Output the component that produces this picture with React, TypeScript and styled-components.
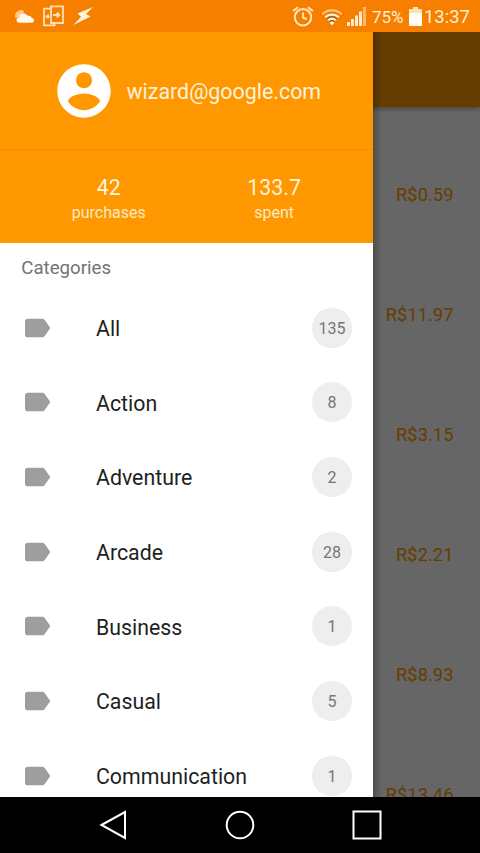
import React from 'react';
import styled, { createGlobalStyle } from 'styled-components';

const GlobalStyle = createGlobalStyle`
  *, *::before, *::after { box-sizing: border-box; }
  html, body { margin: 0; padding: 0; overflow: hidden; }
  body { font-family: Roboto, "Liberation Sans", sans-serif; }
  svg { display: block; flex: none; }
`;

const Screen = styled.div`
  width: 480px;
  height: 853px;
  display: grid;
  grid-template-rows: 32px 765px 56px;
  overflow: hidden;
  background: #000;
`;

const StatusBar = styled.header`
  display: flex;
  justify-content: space-between;
  align-items: center;
  background: #f77f00;
  color: #ffefd4;
  padding: 0 10px 0 14px;
`;

const StatusGroup = styled.div`
  display: flex;
  align-items: center;
`;

const Percent = styled.span`
  width: 36px;
  margin-left: 6px;
  font-size: 17px;
  line-height: 30px;
  padding-top: 2px;
`;

const Clock = styled.time`
  width: 46px;
  margin-left: 2px;
  font-size: 18.4px;
  line-height: 30px;
  padding-top: 2px;
`;

const Content = styled.main`
  position: relative;
  overflow: hidden;
  background: #fff;
`;

const AppBar = styled.div`
  height: 74.67px;
  background: #ff9800;
  box-shadow: 0 2px 5px rgba(0, 0, 0, 0.3);
`;

const PriceList = styled.ul`
  list-style: none;
  margin: 0;
  padding: 28px 26.5px 0 0;
`;

const Price = styled.li`
  height: 120px;
  line-height: 120px;
  text-align: right;
  font-size: 18.4px;
  color: #ff9800;
`;

const Scrim = styled.div`
  position: absolute;
  inset: 0;
  background: rgba(0, 0, 0, 0.6);
`;

const Drawer = styled.aside`
  position: absolute;
  inset: 0 auto 0 0;
  width: 373.33px;
  overflow: hidden;
  background: #fff;
`;

const DrawerShadow = styled.div`
  position: absolute;
  inset: 0 auto 0 373px;
  width: 9px;
  background: linear-gradient(to right, rgba(0, 0, 0, 0.24), transparent);
`;

const Account = styled.div`
  height: 118px;
  display: flex;
  align-items: center;
  padding-left: 51.5px;
  background: #ff9800;
  color: #fff2dc;
  border-bottom: 1px solid #f08c00;
`;

const Email = styled.span`
  padding-top: 3px;
  margin-left: 11px;
  font-size: 21.4px;
  line-height: 28px;
`;

const Stats = styled.div`
  height: 93px;
  display: grid;
  grid-template-columns: 1fr 1fr;
  padding: 25px 16.5px 0 26px;
  background: #ff9800;
  color: #fff2dc;
  text-align: center;
`;

const StatValue = styled.div`
  font-size: 21.33px;
  line-height: 26px;
`;

const StatLabel = styled.div`
  font-size: 16px;
  line-height: 24px;
  color: #ffe9c5;
`;

const SectionTitle = styled.h2`
  margin: 0;
  height: 47.5px;
  padding-left: 21.33px;
  font-size: 18.67px;
  font-weight: 400;
  line-height: 50px;
  color: #737373;
`;

const CategoryRow = styled.div`
  height: 74.67px;
  display: grid;
  grid-template-columns: 32px 1fr 40px;
  align-items: center;
  padding: 0 21.33px;
`;

const CategoryName = styled.span`
  padding: 2.4px 0 0 42.67px;
  font-size: 21.33px;
  line-height: 28px;
  color: #1f1f1f;
`;

const Badge = styled.span`
  width: 40px;
  height: 40px;
  border-radius: 50%;
  background: #eee;
  color: #757575;
  font-size: 16px;
  line-height: 41px;
  text-align: center;
`;

const NavBar = styled.nav`
  display: grid;
  grid-template-columns: repeat(3, 127px);
  justify-content: center;
  justify-items: center;
  align-items: center;
  background: #000;
`;

const categories = [
  { name: 'All', count: 135 },
  { name: 'Action', count: 8 },
  { name: 'Adventure', count: 2 },
  { name: 'Arcade', count: 28 },
  { name: 'Business', count: 1 },
  { name: 'Casual', count: 5 },
  { name: 'Communication', count: 1 },
];

const prices = ['R$0.59', 'R$11.97', 'R$3.15', 'R$2.21', 'R$8.93', 'R$13.46'];

const NotificationIcons = () => (
  <svg width="82" height="32" viewBox="14 0 82 32" fill="none">
    <path d="M15 17.5c-.5-3.600 2-7 5.500-7.500 1.800-.2 3 .5 3.700 1.400l-5.500 6.300z" fill="#ffc982" />
    <path d="M19.500 22.800c-3.800 0-4-5-.5-5.200.3-4.600 6.300-6.300 8.600-1.800 3-.6 3.900 1.200 4 2.200 3.600.3 3.300 4.800 0 4.800z" fill="#fffaf0" />
    <g stroke="#ffe2b4" strokeWidth="1.800">
      <path d="M51 8.700h-7v16.600h10.500v-2M51 6.300h12v16.700H51z" />
      <path d="M45.500 16.500h4M48 14.500v4M53 15h6M56.800 12.500l2.600 2.500-2.600 2.500" />
    </g>
    <path d="M93 7 77.500 13.500l3.500 3.300L73.500 25l17-8.500-4.500-2.500z" fill="#fff3da" />
  </svg>
);

const AlarmIcon = () => (
  <svg width="22" height="22" viewBox="0 0 22 22" fill="none" stroke="#ffe6c0" strokeWidth="2">
    <circle cx="11" cy="12.300" r="8.200" />
    <path d="M11 7.500v5.300l3.800 1.200M1.200 6 6 2.300M20.800 6 16 2.300" />
  </svg>
);

const WifiIcon = () => (
  <svg width="22" height="18" viewBox="0 0 22 18" fill="none">
    <path d="M1.300 6.300c5.500-5.300 13.900-5.300 19.400 0" stroke="#ffc98a" strokeWidth="2" />
    <path d="M4.200 9.300c3.900-3.700 9.700-3.700 13.600 0" stroke="#fff0d8" strokeWidth="2.200" />
    <path d="M7.200 12.200c2.300-1.900 5.300-1.900 7.600 0" stroke="#fff0d8" strokeWidth="2" />
    <path d="M11 17.200 8.500 14.500c1.500-1.200 3.500-1.200 5 0z" fill="#fff" />
    <path d="M6 10.900c3-2.700 7-2.700 10 0M8.300 13.700c1.600-1.100 3.800-1.100 5.400 0" stroke="#80622d" strokeWidth="1.100" />
  </svg>
);

const SignalIcon = () => (
  <svg width="19" height="19" viewBox="0 0 19 19" fill="#ffe9c8">
    <path d="M0 15h3v4H0zM4 12h3v7H4zM8 8.500h3V19H8zM12 4.500h3V19h-3z" />
    <path d="M16 0h3v19h-3z" fill="#ffb769" />
  </svg>
);

const BatteryIcon = () => (
  <svg width="13" height="19" viewBox="0 0 13 19">
    <path d="M4 0h5v2h3c.6 0 1 .4 1 1v4H0V3c0-.6.4-1 1-1h3z" fill="#ffe0b4" />
    <path d="M0 6h13v12c0 .6-.4 1-1 1H1c-.6 0-1-.4-1-1z" fill="#fffdf5" />
  </svg>
);

const AvatarIcon = () => (
  <svg width="64" height="64" viewBox="0 0 24 24" fill="#fff">
    <path d="M12 2C6.480 2 2 6.480 2 12s4.480 10 10 10 10-4.480 10-10S17.520 2 12 2zm0 3c1.660 0 3 1.340 3 3s-1.340 3-3 3-3-1.340-3-3 1.340-3 3-3zm0 14.200c-2.500 0-4.710-1.280-6-3.220.03-1.990 4-3.080 6-3.080 1.990 0 5.970 1.090 6 3.080-1.290 1.940-3.500 3.220-6 3.220z" />
  </svg>
);

const LabelIcon = () => (
  <svg width="32" height="32" viewBox="0 0 24 24" fill="#9e9e9e">
    <path d="M17.630 5.840C17.270 5.330 16.670 5 16 5L5 5.010C3.900 5.010 3 5.900 3 7v10c0 1.100.9 1.990 2 1.990L16 19c.67 0 1.270-.33 1.630-.84L22 12l-4.370-6.160z" />
  </svg>
);

const AlarmSlot = styled.div`margin-right: 7px;`;
const WifiSlot = styled.div`margin: 1px 4px 0 0;`;
const BatterySlot = styled.div`margin: 1px 0 0 1px;`;

export default function App() {
  return (
    <Screen>
      <GlobalStyle />
      <StatusBar>
        <NotificationIcons />
        <StatusGroup>
          <AlarmSlot><AlarmIcon /></AlarmSlot>
          <WifiSlot><WifiIcon /></WifiSlot>
          <SignalIcon />
          <Percent>75%</Percent>
          <BatterySlot><BatteryIcon /></BatterySlot>
          <Clock>13:37</Clock>
        </StatusGroup>
      </StatusBar>
      <Content>
        <AppBar />
        <PriceList>
          {prices.map((price) => <Price key={price}>{price}</Price>)}
        </PriceList>
        <Scrim />
        <DrawerShadow />
        <Drawer>
          <Account>
            <AvatarIcon />
            <Email>wizard@google.com</Email>
          </Account>
          <Stats>
            <div>
              <StatValue>42</StatValue>
              <StatLabel>purchases</StatLabel>
            </div>
            <div>
              <StatValue>133.7</StatValue>
              <StatLabel>spent</StatLabel>
            </div>
          </Stats>
          <SectionTitle>Categories</SectionTitle>
          {categories.map(({ name, count }) => (
            <CategoryRow key={name}>
              <LabelIcon />
              <CategoryName>{name}</CategoryName>
              <Badge>{count}</Badge>
            </CategoryRow>
          ))}
        </Drawer>
      </Content>
      <NavBar>
        <svg width="30" height="30" viewBox="0 0 30 30" fill="none" stroke="#fff" strokeWidth="2">
          <path d="M3.500 15 27 2v26z" />
        </svg>
        <svg width="30" height="30" viewBox="0 0 30 30" fill="none" stroke="#fff" strokeWidth="2">
          <circle cx="15" cy="15" r="13.300" />
        </svg>
        <svg width="30" height="30" viewBox="0 0 30 30" fill="none" stroke="#fff" strokeWidth="2">
          <path d="M1.500 1.500h27v27h-27z" />
        </svg>
      </NavBar>
    </Screen>
  );
}
